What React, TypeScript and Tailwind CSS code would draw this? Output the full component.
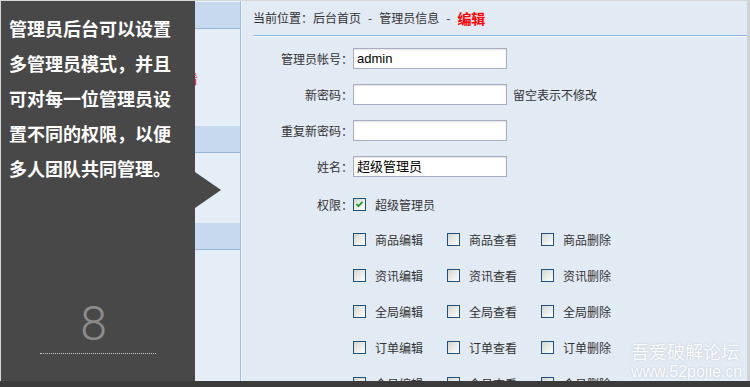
import React from "react";

function Box({ checked = false }: { checked?: boolean }) {
  return (
    <span className="relative shrink-0 w-[13px] h-[13px] border border-[#1c5180] bg-linear-to-br from-[#d6d6d0] to-white">
      {checked && (
        <svg className="absolute left-[1px] top-[1px]" width="9" height="9" viewBox="0 0 9 9">
          <path d="M1.5 4 L3.5 6.2 L7.5 1.8" stroke="#21a121" strokeWidth="1.8" fill="none" />
        </svg>
      )}
    </span>
  );
}

const grid = [
  ["商品编辑", "商品查看", "商品删除"],
  ["资讯编辑", "资讯查看", "资讯删除"],
  ["全局编辑", "全局查看", "全局删除"],
  ["订单编辑", "订单查看", "订单删除"],
  ["会员编辑", "会员查看", "会员删除"],
];

function Field({ label, value, hint }: { label: string; value?: string; hint?: string }) {
  return (
    <div className="flex items-center h-[21px]">
      <div className="w-[100px] text-right text-[12px] text-[#333]">{label}</div>
      <div className="w-[154px] h-[21px] border border-[#a7adc2] bg-white shadow-[inset_0_1px_2px_rgba(0,0,0,0.12)] px-[3px] flex items-center text-[13px] text-black font-['Liberation_Sans','Noto_Sans_CJK_SC',sans-serif]">
        {value}
      </div>
      {hint && <div className="ml-[6px] text-[12px] text-[#333]">{hint}</div>}
    </div>
  );
}

export default function App() {
  return (
    <div className="relative w-[750px] h-[387px] overflow-hidden bg-[#d6d6d6] flex flex-col font-['Noto_Sans_CJK_SC',sans-serif]">
      <div className="h-px shrink-0 bg-[#d6d6d6]" />
      <div className="flex h-[380px] shrink-0 overflow-hidden">
        <div className="w-px shrink-0 bg-[#d6d6d6]" />
        {/* dark panel */}
        <div className="w-[194px] shrink-0 bg-[#484848] flex flex-col pb-[27px]">
          <div className="pt-[10px] pl-[8px] text-[18px] font-bold leading-[35px] text-white">
            <div>管理员后台可以设置</div>
            <div>多管理员模式，并且</div>
            <div>可对每一位管理员设</div>
            <div>置不同的权限，以便</div>
            <div>多人团队共同管理。</div>
          </div>
          <div className="flex-1" />
          <div className="ml-[39px] w-[116px]">
            <div className="h-[48px] leading-none text-center pr-[9px] text-[48px] font-light text-[#8c8c8c] font-['Roboto',sans-serif]">8</div>
            <div className="mt-[5px] border-t border-dotted border-[#c8c8c8]" />
          </div>
        </div>
        {/* sidebar */}
        <div className="w-[46px] shrink-0 bg-[#e5edf7] border-r border-[#9ebde6] overflow-hidden flex flex-col">
          <div className="h-[28px] shrink-0 bg-[#c6d9ef] border-b border-[#96b5dc] border-t border-t-[#e8f0fa]" />
          <div className="h-[97px] shrink-0 pt-[44px]">
            <span className="block -ml-[9px] text-[12px] leading-[12px] text-[#ff0000] whitespace-nowrap">看</span>
          </div>
          <div className="h-[27px] shrink-0 bg-[#c6d9ef] border-b border-[#96b5dc]" />
          <div className="h-[70px] shrink-0" />
          <div className="h-[27px] shrink-0 bg-[#c6d9ef] border-b border-[#96b5dc]" />
          <div className="flex-1" />
        </div>
        {/* main */}
        <div className="flex-1 bg-[#e2eaf4] border-l border-[#f2f6fb] pl-[11px] text-[#333]">
          <div className="h-[35px] flex items-center border-b border-[#8db2e3] text-[12px] text-[#333] whitespace-nowrap">
            <span>当前位置：后台首页</span>
            <span className="mx-[7px]">-</span>
            <span>管理员信息</span>
            <span className="mx-[7px]">-</span>
            <span className="text-[14px] font-bold text-[#f00]">编辑</span>
          </div>
          <div className="h-px bg-white" />
          <div className="mt-[11px] flex flex-col gap-[15px]">
            <Field label="管理员帐号：" value="admin" />
            <Field label="新密码：" hint="留空表示不修改" />
            <Field label="重复新密码：" />
            <Field label="姓名：" value="超级管理员" />
          </div>
          <div className="mt-[17px] flex items-center h-[21px]">
            <div className="w-[100px] text-right text-[12px] text-[#333]">权限：</div>
            <Box checked />
            <span className="ml-[9px] text-[12px] text-[#333]">超级管理员</span>
          </div>
          <div className="mt-[14px] ml-[100px] flex flex-col gap-[15px]">
            {grid.map((row, i) => (
              <div key={i} className="flex h-[21px] items-center">
                {row.map((t) => (
                  <div key={t} className="w-[94px] flex items-center gap-[9px]">
                    <Box />
                    <span className="text-[12px] text-[#333]">{t}</span>
                  </div>
                ))}
              </div>
            ))}
          </div>
        </div>
        <div className="w-[3px] shrink-0 bg-[#d2d2d2]" />
      </div>
      <div className="flex-1 bg-[#3b3b3b]" />

      {/* arrow */}
      <div className="absolute left-[195px] top-[172px] w-0 h-0 border-y-[18px] border-y-transparent border-l-[26px] border-l-[#484848]" />

      {/* watermark */}
      <div className="absolute left-[631px] top-[339px] text-white/95 [text-shadow:0_0_2px_rgba(150,160,170,0.5)]">
        <div className="text-[18px] leading-[24px]">吾爱破解论坛</div>
        <div className="text-[16px] leading-[18px] font-['Liberation_Sans',sans-serif]">www.52pojie.cn</div>
      </div>
    </div>
  );
}
